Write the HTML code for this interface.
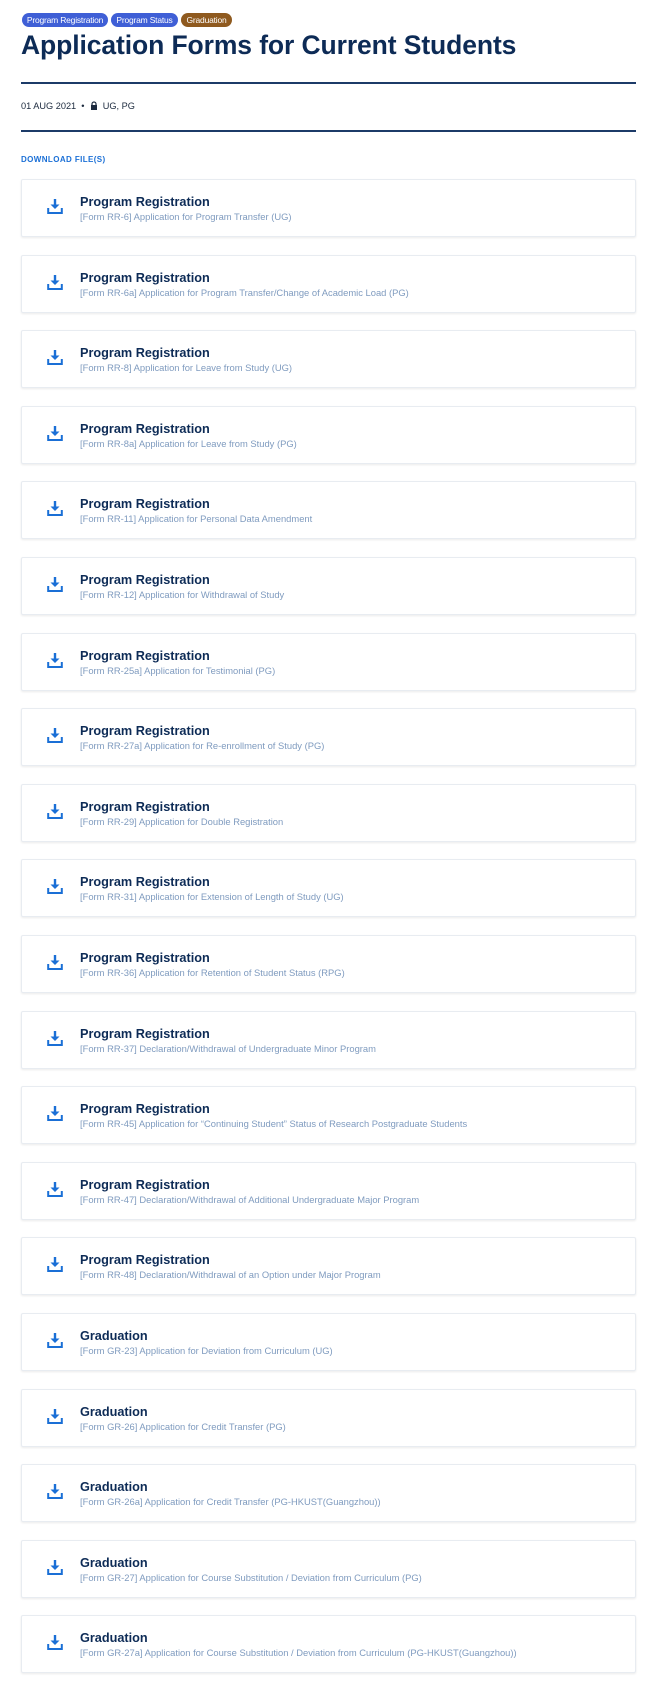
<!DOCTYPE html>
<html><head><meta charset="utf-8"><style>
*{margin:0;padding:0;box-sizing:border-box}
body{width:670px;height:1695px;background:#fff;font-family:"Liberation Sans",sans-serif;position:relative;overflow:hidden}
.tag{position:absolute;top:13px;height:14px;border-radius:7px;color:#fff;font-size:8.5px;line-height:14px;text-align:center;letter-spacing:-0.2px}
h1{position:absolute;left:21px;top:30px;font-size:26.5px;font-weight:bold;color:#0d2b56;letter-spacing:-0.1px;white-space:nowrap}
.line{position:absolute;left:21px;width:615px;height:2px;background:#1c3b68}
.meta{position:absolute;left:21px;top:101px;font-size:9.2px;color:#1c2a3e}
.dl{position:absolute;left:21px;top:155px;font-size:8px;font-weight:bold;color:#1a6fd6;letter-spacing:0.4px}
.card{position:absolute;left:21px;width:615px;height:58px;border:1px solid #e8ecf1;border-radius:2px;box-shadow:0 1px 2px rgba(0,0,0,0.08);background:#fff}
.card svg{position:absolute;left:25px;top:18px}
.t{position:absolute;left:58px;top:15px;font-size:12.7px;font-weight:bold;color:#0d2b56;white-space:nowrap}
.s{position:absolute;left:58px;top:31px;font-size:9.4px;color:#7f9bbf;white-space:nowrap}
</style></head><body>
<div class="tag" style="left:22px;width:86px;background:#3f5fd6">Program Registration</div>
<div class="tag" style="left:111px;width:67px;background:#3f5fd6">Program Status</div>
<div class="tag" style="left:181px;width:51px;background:#8f5a1f">Graduation</div>
<h1>Application Forms for Current Students</h1>
<div class="line" style="top:82px"></div>
<div class="meta">01 AUG 2021 &nbsp;•&nbsp; <svg width="8" height="9" viewBox="0 0 8 9" style="vertical-align:-1px"><path d="M2 4V3a2 2 0 0 1 4 0v1" stroke="#1c2a3e" stroke-width="1.2" fill="none"/><rect x="1" y="4" width="6" height="5" fill="#1c2a3e"/></svg>&nbsp; UG, PG</div>
<div class="line" style="top:130px"></div>
<div class="dl">DOWNLOAD FILE(S)</div>
<div id="c"></div>
<script>
const d=[["Program Registration","[Form RR-6] Application for Program Transfer (UG)"],
["Program Registration","[Form RR-6a] Application for Program Transfer/Change of Academic Load (PG)"],
["Program Registration","[Form RR-8] Application for Leave from Study (UG)"],
["Program Registration","[Form RR-8a] Application for Leave from Study (PG)"],
["Program Registration","[Form RR-11] Application for Personal Data Amendment"],
["Program Registration","[Form RR-12] Application for Withdrawal of Study"],
["Program Registration","[Form RR-25a] Application for Testimonial (PG)"],
["Program Registration","[Form RR-27a] Application for Re-enrollment of Study (PG)"],
["Program Registration","[Form RR-29] Application for Double Registration"],
["Program Registration","[Form RR-31] Application for Extension of Length of Study (UG)"],
["Program Registration","[Form RR-36] Application for Retention of Student Status (RPG)"],
["Program Registration","[Form RR-37] Declaration/Withdrawal of Undergraduate Minor Program"],
["Program Registration","[Form RR-45] Application for “Continuing Student” Status of Research Postgraduate Students"],
["Program Registration","[Form RR-47] Declaration/Withdrawal of Additional Undergraduate Major Program"],
["Program Registration","[Form RR-48] Declaration/Withdrawal of an Option under Major Program"],
["Graduation","[Form GR-23] Application for Deviation from Curriculum (UG)"],
["Graduation","[Form GR-26] Application for Credit Transfer (PG)"],
["Graduation","[Form GR-26a] Application for Credit Transfer (PG-HKUST(Guangzhou))"],
["Graduation","[Form GR-27] Application for Course Substitution / Deviation from Curriculum (PG)"],
["Graduation","[Form GR-27a] Application for Course Substitution / Deviation from Curriculum (PG-HKUST(Guangzhou))"]];
let h="";
d.forEach((x,i)=>{const top=179+i*75.6;
h+=`<div class="card" style="top:${top}px"><svg width="16" height="17" viewBox="0 0 16 17"><path d="M8 1v8" stroke="#1a6fd6" stroke-width="2.4"/><path d="M3.5 6.5L8 11l4.5-4.5z" fill="#1a6fd6"/><path d="M1.2 10v5h13.6v-5" stroke="#1a6fd6" stroke-width="2" fill="none"/></svg><div class="t">${x[0]}</div><div class="s">${x[1]}</div></div>`});
document.getElementById("c").innerHTML=h;
</script>
</body></html>
